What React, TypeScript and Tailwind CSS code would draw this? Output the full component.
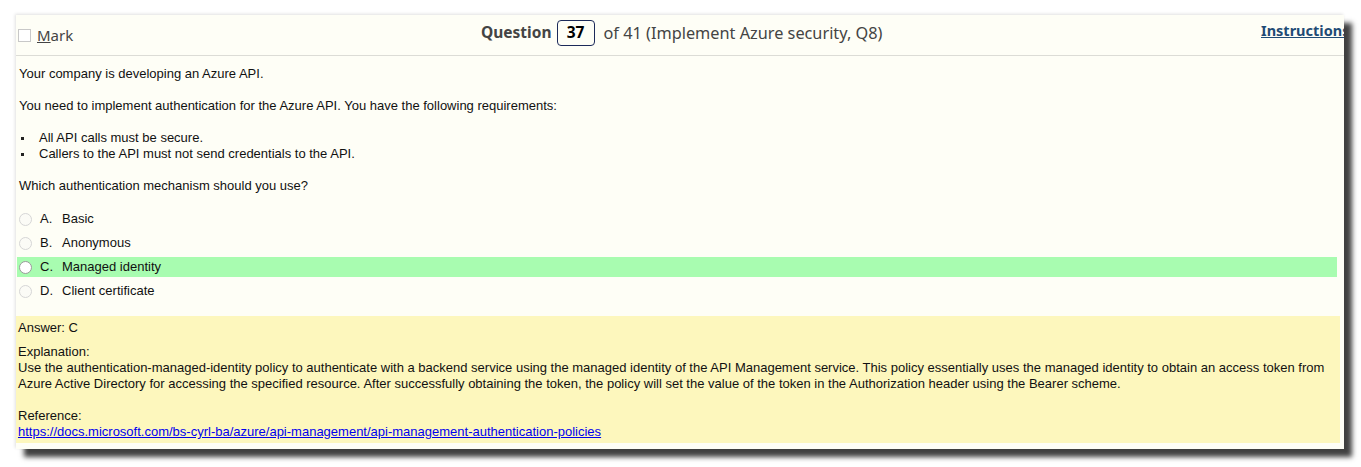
import { useState } from 'react';

const options = [
  { key: 'A', label: 'Basic' },
  { key: 'B', label: 'Anonymous' },
  { key: 'C', label: 'Managed identity', correct: true },
  { key: 'D', label: 'Client certificate' },
];

const Radio = ({ active }: { active?: boolean }) => (
  <span
    className={
      'inline-block w-[13px] h-[13px] rounded-full border ' +
      (active ? 'border-[#9a9a9a] bg-white' : 'border-[#d6d6d6] bg-[#fbfbf6]')
    }
  />
);

const Bullet = () => (
  <span className="w-[20px] shrink-0 flex items-center pl-[2px]">
    <span className="w-[3px] h-[3px] bg-[#222]" />
  </span>
);

export default function App() {
  const [marked, setMarked] = useState(false);

  return (
    <div className="w-[1361px] h-[467px] bg-white overflow-hidden pt-[15px] pl-[16px]">
      <div className="w-[1328px] h-[434px] bg-[#fefef6] shadow-[8px_8px_5px_rgba(0,0,0,0.75),-1px_-1px_3px_rgba(0,0,0,0.12)] flex flex-col overflow-hidden">
        {/* header */}
        <div className="h-[41px] shrink-0 border-b border-[#dcdcd6] flex items-center relative font-['Noto_Sans',sans-serif] text-[#444]">
          <label className="flex items-center pl-[2px] cursor-pointer" onClick={() => setMarked(!marked)}>
            <span className="w-[13px] h-[13px] border border-[#c8c8c8] bg-white" />
            <span className="ml-[6px] text-[15px]">
              <span className="underline">M</span>ark
            </span>
          </label>
          <div className="absolute left-[465px] top-[5px] flex items-center text-[15.5px]">
            <span className="font-bold">Question</span>
            <span className="ml-[5px] w-[38px] h-[26px] border border-[#1c2a5a] rounded-[4px] flex items-center justify-center font-bold text-black">
              37
            </span>
            <span className="ml-[9px] text-[16.3px]">of 41 (Implement Azure security, Q8)</span>
          </div>
          <a className="absolute left-[1245px] top-[5px] font-bold text-[14.5px] text-[#1f4b75] underline whitespace-nowrap">
            Instructions
          </a>
        </div>

        {/* question */}
        <div className="font-['Liberation_Sans',Arial,sans-serif] text-[13px] leading-[16px] text-[#111] pl-[3px] pt-[10px]">
          <p>Your company is developing an Azure API.</p>
          <p className="mt-[16px]">
            You need to implement authentication for the Azure API. You have the following requirements:
          </p>
          <ul className="mt-[16px]">
            <li className="flex">
              <Bullet />
              All API calls must be secure.
            </li>
            <li className="flex">
              <Bullet />
              Callers to the API must not send credentials to the API.
            </li>
          </ul>
          <p className="mt-[16px]">Which authentication mechanism should you use?</p>
        </div>

        <div className="font-['Liberation_Sans',Arial,sans-serif] text-[13px] text-[#111] mt-[15px] pr-[7px] pl-[1px]">
          {options.map((o) => (
            <div
              key={o.key}
              className={'h-[20px] mb-[4px] flex items-center ' + (o.correct ? 'bg-[#a8fcb0]' : '')}
            >
              <span className="ml-[2px] flex items-center">
                <Radio active={o.correct} />
              </span>
              <span className="ml-[8px] w-[22px]">{o.key}.</span>
              <span>{o.label}</span>
            </div>
          ))}
        </div>

        {/* answer */}
        <div className="mt-[11px] mr-[4px] h-[127px] bg-[#fdf7bd] font-['Liberation_Sans',Arial,sans-serif] text-[13px] leading-[16px] text-[#111] pl-[2px] pt-[4px] whitespace-nowrap">
          <p>Answer: C</p>
          <p className="mt-[8px]">Explanation:</p>
          <p>
            Use the authentication-managed-identity policy to authenticate with a backend service using the managed identity of the API Management service. This policy essentially uses the managed identity to obtain an access token from
            <br />
            Azure Active Directory for accessing the specified resource. After successfully obtaining the token, the policy will set the value of the token in the Authorization header using the Bearer scheme.
          </p>
          <p className="mt-[16px]">Reference:</p>
          <a className="text-[#0000ee] underline" href="#">
            https://docs.microsoft.com/bs-cyrl-ba/azure/api-management/api-management-authentication-policies
          </a>
        </div>
      </div>
    </div>
  );
}
